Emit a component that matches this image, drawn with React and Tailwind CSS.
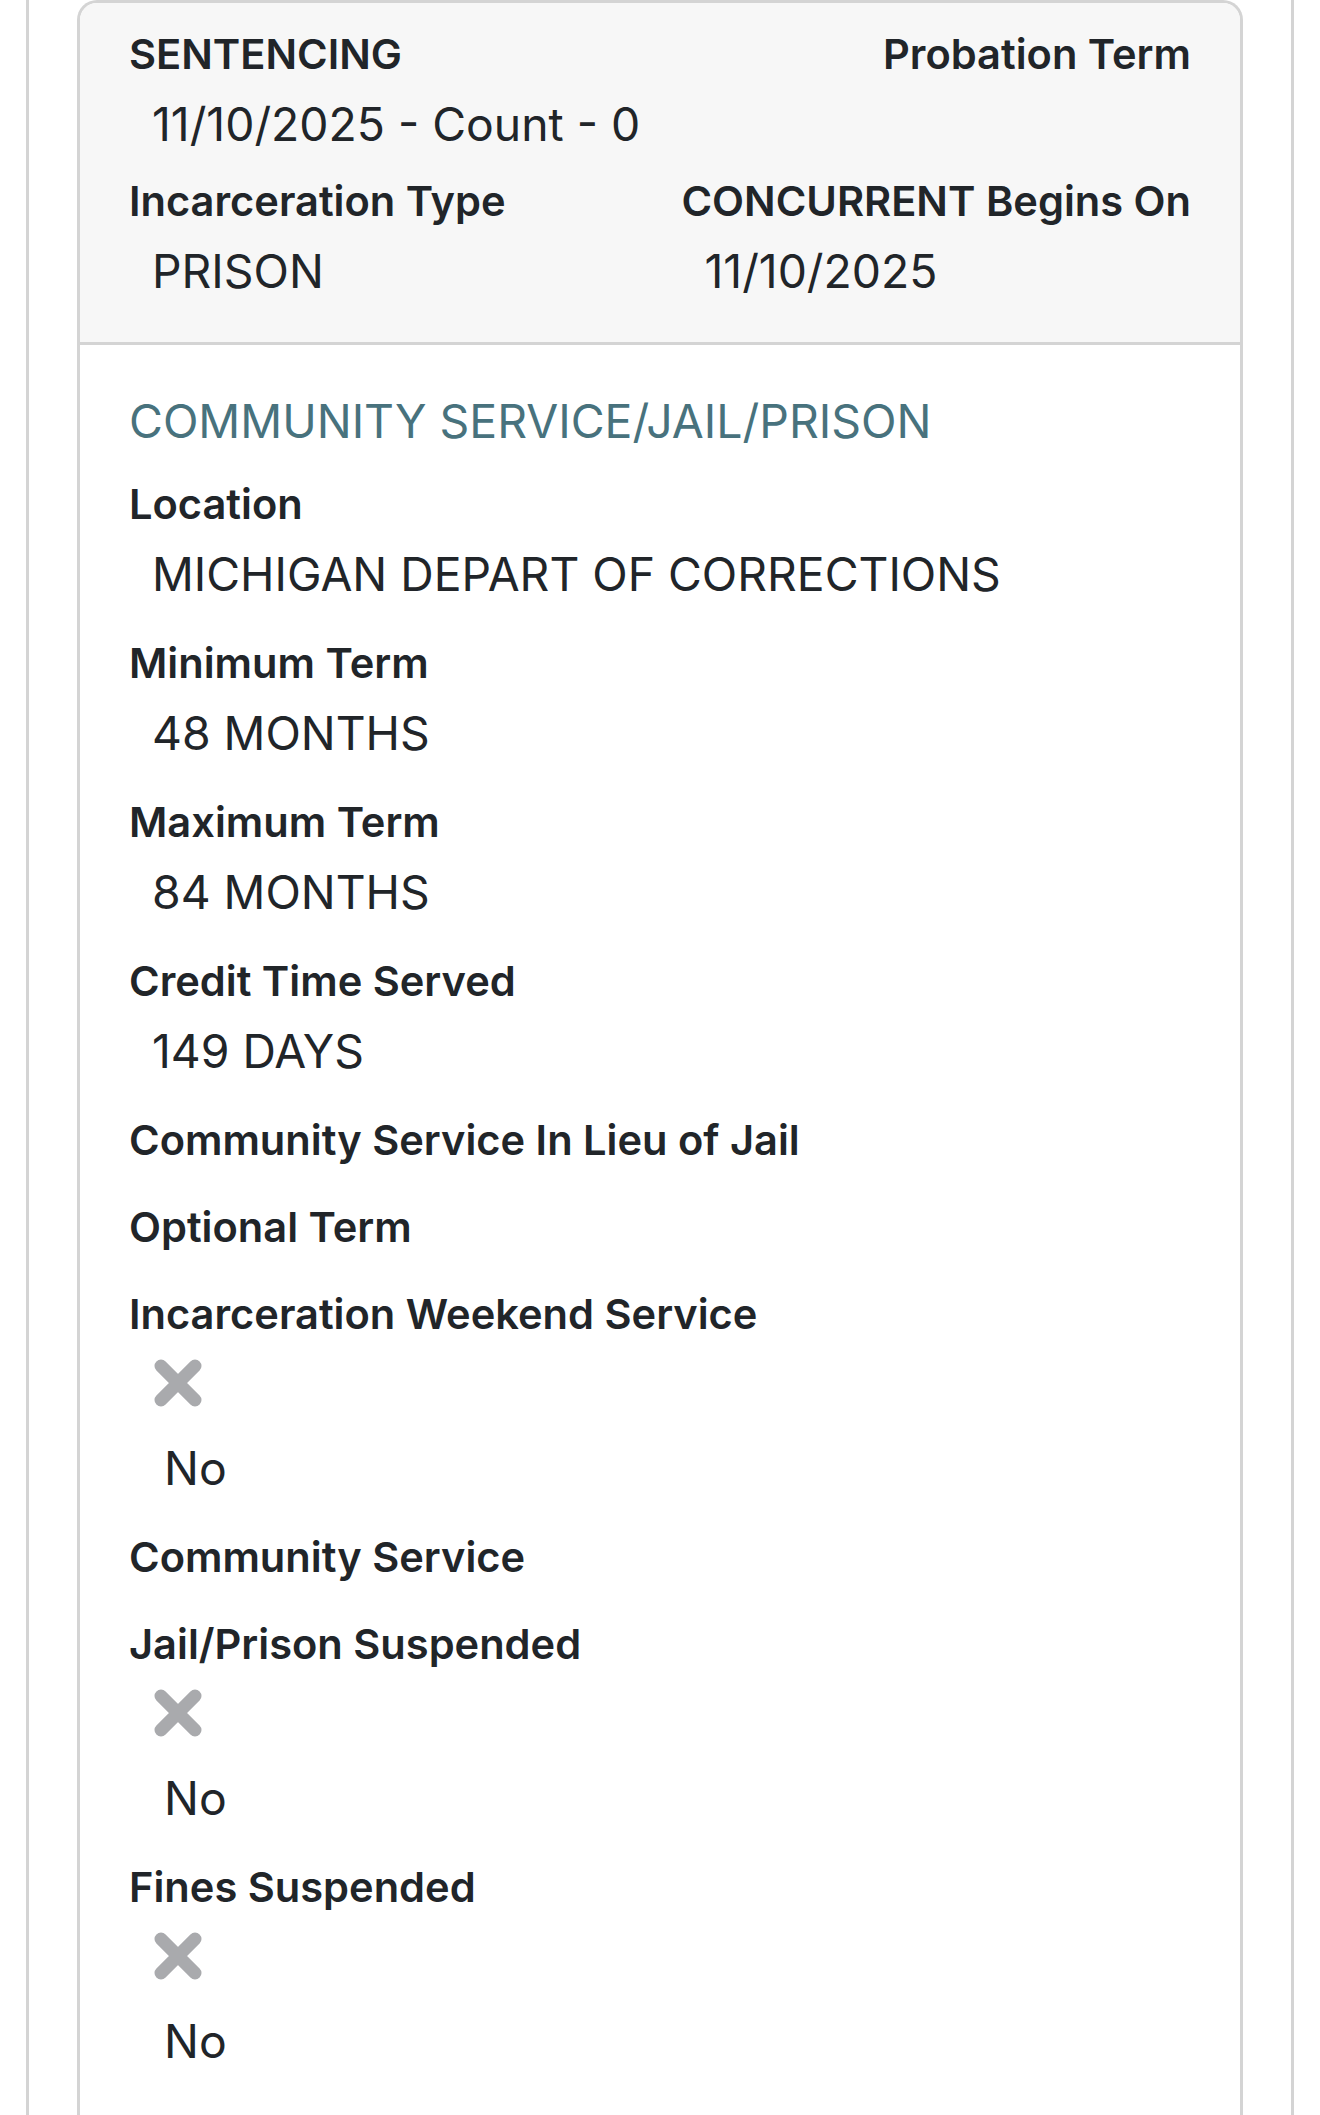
import React from 'react';

const fields = [
  { label: 'Location', value: 'MICHIGAN DEPART OF CORRECTIONS' },
  { label: 'Minimum Term', value: '48 MONTHS' },
  { label: 'Maximum Term', value: '84 MONTHS' },
  { label: 'Credit Time Served', value: '149 DAYS' },
  { label: 'Community Service In Lieu of Jail' },
  { label: 'Optional Term' },
  { label: 'Incarceration Weekend Service', flag: false },
  { label: 'Community Service' },
  { label: 'Jail/Prison Suspended', flag: false },
  { label: 'Fines Suspended', flag: false },
];

function XMark() {
  return (
    <svg width="50" height="50" viewBox="0 0 50 50" className="block">
      <path d="M8 8 L42 42 M42 8 L8 42" stroke="#a9aaad" strokeWidth="13" strokeLinecap="round" />
    </svg>
  );
}

function Label({ children }) {
  return <div className="h-[70px] flex items-center text-[41.6px] font-semibold whitespace-nowrap">{children}</div>;
}

function Value({ children }) {
  return <div className="h-[72px] flex items-center pl-[23px] text-[46.3px] whitespace-nowrap">{children}</div>;
}

function Field({ field }) {
  return (
    <div className="mb-[17px]">
      <Label>{field.label}</Label>
      {field.value && <Value>{field.value}</Value>}
      {field.flag === false && (
        <div>
          <div className="h-[67px] flex items-center pl-[24px]">
            <XMark />
          </div>
          <div className="mt-[17px] h-[72px] flex items-center pl-[35px] text-[46.3px]">No</div>
        </div>
      )}
    </div>
  );
}

export default function App() {
  return (
    <div className="bg-white min-h-[2115px] overflow-hidden text-[#212529]" style={{ fontFamily: 'Inter, "Noto Sans", sans-serif' }}>
      <div className="ml-[26px] w-[1268px] min-h-[2115px] border-x-[3px] border-[#d4d4d4] px-[48px]">
        <div className="min-h-[2115px] border-x-[3px] border-t-[3px] border-[#d4d4d4] rounded-t-[20px] overflow-hidden">
          <div className="bg-[#f7f7f7] border-b-[3px] border-[#d4d4d4] px-[49px] pt-[16px] pb-[34px]">
            <div className="flex justify-between items-start">
              <div>
                <Label>SENTENCING</Label>
                <Value>11/10/2025 - Count - 0</Value>
              </div>
              <Label>Probation Term</Label>
            </div>
            <div className="flex justify-between items-start mt-[5px]">
              <div>
                <Label>Incarceration Type</Label>
                <Value>PRISON</Value>
              </div>
              <div>
                <Label>CONCURRENT Begins On</Label>
                <Value>11/10/2025</Value>
              </div>
            </div>
          </div>
          <div className="px-[49px] pt-[45px]">
            <div className="h-[64px] mb-[15px] flex items-center text-[46.4px] text-[#48727d] whitespace-nowrap">
              COMMUNITY SERVICE/JAIL/PRISON
            </div>
            {fields.map((f) => (
              <Field key={f.label} field={f} />
            ))}
          </div>
        </div>
      </div>
    </div>
  );
}
